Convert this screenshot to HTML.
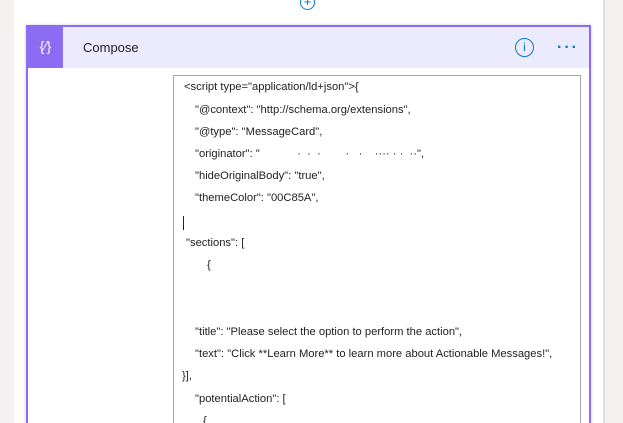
<!DOCTYPE html>
<html><head><style>
html,body{margin:0;width:623px;height:423px;overflow:hidden}
body{background:#f3f2f1;font-family:"Liberation Sans",sans-serif;position:relative}
.panel{position:absolute;left:14px;top:0;width:589px;height:423px;background:#fff;border-right:2px solid #e1dfdd}
.plus{position:absolute;left:300px;top:-5px;width:13px;height:13px;border:1.5px solid #0078d4;border-radius:50%;color:#0078d4;font-size:13px;line-height:12px;text-align:center}
.card{position:absolute;left:26px;top:25px;width:561px;height:398px;border:2px solid #8c6cf7;border-bottom:none;background:#fff;box-shadow:0 0 3px rgba(0,0,0,.2);overflow:hidden}
.hdr{position:absolute;left:0;top:0;width:561px;height:41px;background:#ecebfd}
.ic{position:absolute;left:0;top:0;width:35px;height:41px;background:#8b6cf3;color:#fff;font-size:14px;line-height:38px;text-align:center}
.title{position:absolute;left:55px;top:13px;font-size:13px;color:#222}
.info{position:absolute;left:487px;top:11px;width:17px;height:17px;border:1.5px solid #0078d4;border-radius:50%;color:#0078d4;font-size:12px;line-height:17px;text-align:center}
.dots{position:absolute;left:529px;top:12px;color:#0078d4;font-size:16px;letter-spacing:2px;font-weight:bold}
.box{position:absolute;left:145px;top:48px;width:406px;height:380px;border:1px solid #a6a6a6;overflow:hidden}
.l{position:absolute;font-size:11.2px;color:#222;white-space:pre}
</style></head><body>
<div class="panel"></div>
<div class="plus">+</div>
<div class="card">
<div class="hdr"><div class="ic">{&#x2215;}</div><div class="title">Compose</div><div class="info">i</div><div class="dots">···</div></div>
<div class="box">
<div class="l" style="left:10px;top:5px">&lt;script type="application/ld+json"&gt;{</div>
<div class="l" style="left:21px;top:28px">"@context": "http://schema.org/extensions",</div>
<div class="l" style="left:21px;top:50px">"@type": "MessageCard",</div>
<div class="l" style="left:21px;top:72px">"originator": "            ·  ·  ·        ·   ·    ···· · ·  ··",</div>
<div class="l" style="left:21px;top:94px">"hideOriginalBody": "true",</div>
<div class="l" style="left:21px;top:116px">"themeColor": "00C85A",</div>
<div style="position:absolute;left:9px;top:140px;width:1px;height:14px;background:#222"></div>
<div class="l" style="left:12px;top:161px">"sections": [</div>
<div class="l" style="left:33px;top:183px">{</div>
<div class="l" style="left:21px;top:250px">"title": "Please select the option to perform the action",</div>
<div class="l" style="left:21px;top:272px">"text": "Click **Learn More** to learn more about Actionable Messages!",</div>
<div class="l" style="left:8px;top:294px">}],</div>
<div class="l" style="left:21px;top:317px">"potentialAction": [</div>
<div class="l" style="left:29px;top:339px">{</div>
</div>
</div>
</body></html>
